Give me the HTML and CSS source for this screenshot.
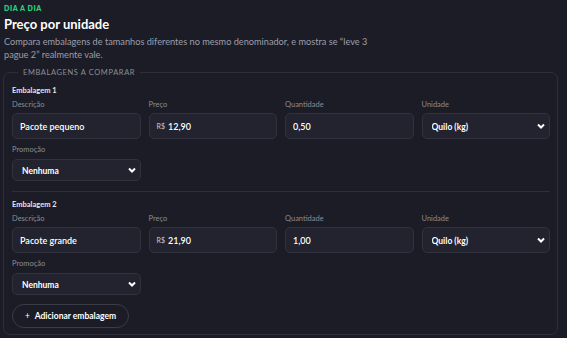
FILE: index.html
```html
<!DOCTYPE html>
<html lang="pt-BR">

<head>
    <meta charset="UTF-8" />
    <meta name="viewport" content="width=device-width, initial-scale=1.0" />
    <title>Preço por unidade</title>
    <link rel="stylesheet" href="styles.css">
</head>

<body>
    <main class="page">
        <p class="eyebrow">Dia a dia</p>
        <h1 class="title">Preço por unidade</h1>
        <p class="lead">Compara embalagens de tamanhos diferentes no mesmo denominador, e mostra se “leve 3 pague 2” realmente vale.</p>

        <fieldset class="packs">
            <legend>Embalagens a comparar</legend>

            <div class="pack">
                <h2 class="pack-title">Embalagem 1</h2>
                <div class="grid">
                    <label class="field">
                        <span class="label">Descrição</span>
                        <input class="input" type="text" value="Pacote pequeno">
                    </label>
                    <label class="field">
                        <span class="label">Preço</span>
                        <span class="input money"><span class="prefix">R$</span><input type="text" value="12,90"></span>
                    </label>
                    <label class="field">
                        <span class="label">Quantidade</span>
                        <input class="input" type="text" value="0,50">
                    </label>
                    <label class="field">
                        <span class="label">Unidade</span>
                        <span class="select-wrap">
                            <select class="input select">
                                <option>Quilo (kg)</option>
                            </select>
                            <svg class="chevron" width="10" height="10" viewBox="0 0 10 10"><path d="M2 3.5 L5 6.5 L8 3.5" fill="none" stroke="#fff" stroke-width="2"/></svg>
                        </span>
                    </label>
                    <label class="field">
                        <span class="label">Promoção</span>
                        <span class="select-wrap">
                            <select class="input select small">
                                <option>Nenhuma</option>
                            </select>
                            <svg class="chevron" width="10" height="10" viewBox="0 0 10 10"><path d="M2 3.5 L5 6.5 L8 3.5" fill="none" stroke="#fff" stroke-width="2"/></svg>
                        </span>
                    </label>
                </div>
            </div>

            <div class="pack">
                <h2 class="pack-title">Embalagem 2</h2>
                <div class="grid">
                    <label class="field">
                        <span class="label">Descrição</span>
                        <input class="input" type="text" value="Pacote grande">
                    </label>
                    <label class="field">
                        <span class="label">Preço</span>
                        <span class="input money"><span class="prefix">R$</span><input type="text" value="21,90"></span>
                    </label>
                    <label class="field">
                        <span class="label">Quantidade</span>
                        <input class="input" type="text" value="1,00">
                    </label>
                    <label class="field">
                        <span class="label">Unidade</span>
                        <span class="select-wrap">
                            <select class="input select">
                                <option>Quilo (kg)</option>
                            </select>
                            <svg class="chevron" width="10" height="10" viewBox="0 0 10 10"><path d="M2 3.5 L5 6.5 L8 3.5" fill="none" stroke="#fff" stroke-width="2"/></svg>
                        </span>
                    </label>
                    <label class="field">
                        <span class="label">Promoção</span>
                        <span class="select-wrap">
                            <select class="input select small">
                                <option>Nenhuma</option>
                            </select>
                            <svg class="chevron" width="10" height="10" viewBox="0 0 10 10"><path d="M2 3.5 L5 6.5 L8 3.5" fill="none" stroke="#fff" stroke-width="2"/></svg>
                        </span>
                    </label>
                </div>
            </div>

            <button class="add-button" type="button"><span class="plus">+</span> Adicionar embalagem</button>
        </fieldset>
    </main>
</body>

</html>
```

FILE: styles.css
```css
body {
    margin: 0;
    background: #1b1c25;
    color: #f2f2f5;
    font-family: "Lato", "Inter", sans-serif;
}

.page {
    padding: 4px 9px 0 3px;
}

.eyebrow {
    margin: 0 0 0 1px;
    color: #25d07c;
    font-size: 7px;
    font-weight: 800;
    letter-spacing: 0.6px;
    text-transform: uppercase;
    line-height: 9px;
}

.title {
    margin: 3px 0 0 1px;
    font-size: 13px;
    font-weight: 700;
    line-height: 16px;
    color: #ffffff;
}

.lead {
    margin: 4px 0 0 1px;
    width: 365px;
    font-size: 9.2px;
    line-height: 12.5px;
    color: #9c9eaa;
}

.packs {
    margin: 7px 0 0 0;
    padding: 9px 7px 6px 8px;
    border: 1px solid #2d2f3a;
    border-radius: 7px;
    min-width: 0;
}

.packs legend {
    padding: 0 5px;
    margin-left: 6px;
    font-size: 7.5px;
    letter-spacing: 0.6px;
    text-transform: uppercase;
    color: #8c8e9a;
}

.pack + .pack {
    margin-top: 10px;
    padding-top: 8px;
    border-top: 1px solid #2d2f3a;
}

.pack-title {
    margin: 0 0 5px;
    font-size: 7.5px;
    font-weight: 700;
    color: #e6e6ec;
    line-height: 9px;
}

.grid {
    display: grid;
    grid-template-columns: repeat(4, minmax(0, 1fr));
    column-gap: 8px;
    row-gap: 6px;
}

.field {
    display: flex;
    flex-direction: column;
    gap: 4px;
}

.label {
    font-size: 7.5px;
    color: #8a8c98;
    line-height: 9px;
}

.input {
    box-sizing: border-box;
    height: 26px;
    width: 100%;
    padding: 0 7px;
    background: #22232e;
    border: 1px solid #30323e;
    border-radius: 5px;
    color: #ffffff;
    font-family: inherit;
    font-size: 9px;
    font-weight: 600;
    outline: none;
}

.money {
    display: flex;
    align-items: center;
    gap: 3px;
}

.money .prefix {
    font-size: 7px;
    color: #b6b8c4;
}

.money input {
    flex: 1;
    min-width: 0;
    padding: 0;
    background: none;
    border: 0;
    color: #ffffff;
    font-family: inherit;
    font-size: 9px;
    font-weight: 600;
    outline: none;
}

.select-wrap {
    position: relative;
    display: block;
}

.select {
    appearance: none;
    padding: 2px 9px 0;
    font-size: 8.5px;
    font-weight: 700;
}

.select.small {
    height: 22px;
}

.chevron {
    position: absolute;
    right: 4px;
    top: 50%;
    margin-top: -5px;
    pointer-events: none;
}

.add-button {
    margin-top: 9px;
    height: 24px;
    padding: 0 12px;
    background: transparent;
    border: 1px solid #3a3c48;
    border-radius: 12px;
    color: #ffffff;
    font-family: inherit;
    font-size: 8.5px;
    font-weight: 700;
    cursor: pointer;
}

.plus {
    font-weight: 400;
    margin-right: 3px;
}
```
